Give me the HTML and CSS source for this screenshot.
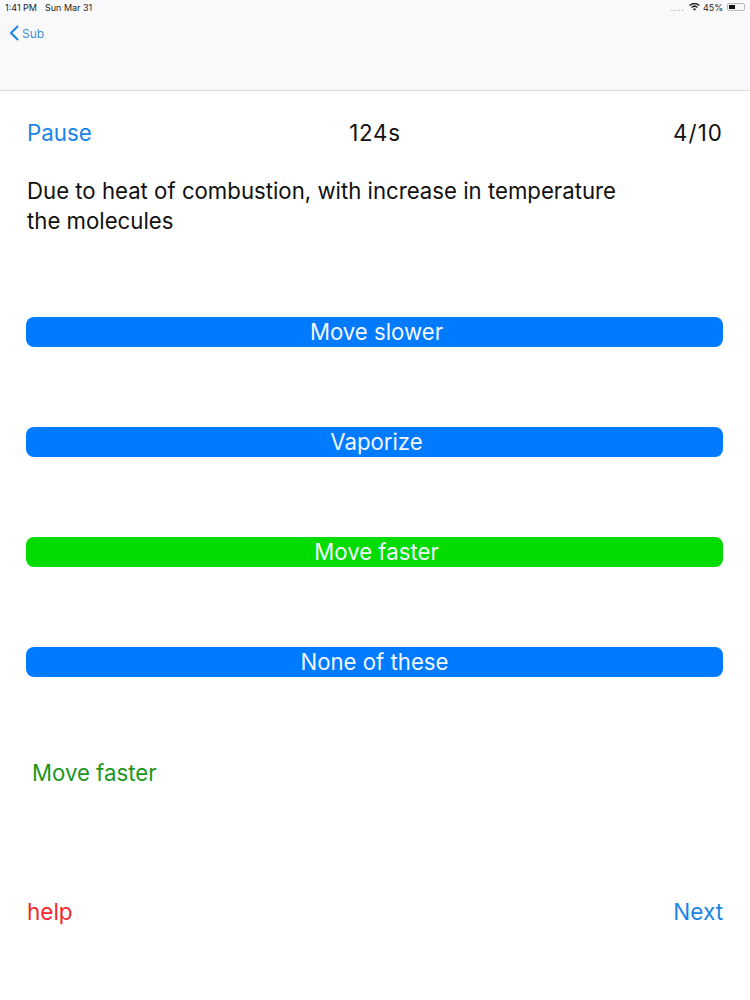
FILE: index.html
```html
<!DOCTYPE html>
<html lang="en">
<head>
<meta charset="utf-8">
<title>Quiz</title>
<link rel="stylesheet" href="styles.css">
</head>
<body>
<header class="nav">
  <div class="status">
    <div class="status-left"><span>1:41 PM</span><span>Sun Mar 31</span></div>
    <div class="status-right">
      <span class="signal">....</span>
      <svg class="wifi" viewBox="0 0 12 9" width="11" height="8"><path d="M6 8.6 4.3 6.7a2.5 2.5 0 0 1 3.4 0zM3.3 5.6 2.2 4.4a5.6 5.6 0 0 1 7.6 0L8.7 5.6a4 4 0 0 0-5.4 0zM1.2 3.4 0 2.2a8.8 8.8 0 0 1 12 0l-1.2 1.2a7.1 7.1 0 0 0-9.6 0z" fill="#222"/></svg>
      <span>45%</span>
      <span class="battery"><span class="battery-fill"></span></span>
    </div>
  </div>
  <a class="back">
    <svg viewBox="0 0 10 16" width="10" height="16"><path d="M8.5 1.500 2 8l6.500 6.500" fill="none" stroke="#1a84e6" stroke-width="2" stroke-linecap="round" stroke-linejoin="round"/></svg>
    <span>Sub</span>
  </a>
</header>
<main class="content">
  <div class="top-row">
    <span class="link">Pause</span>
    <span class="timer">124s</span>
    <span class="count">4/10</span>
  </div>
  <p class="question">Due to heat of combustion, with increase in temperature<br>the molecules</p>
  <div class="answers">
    <button class="answer">Move slower</button>
    <button class="answer">Vaporize</button>
    <button class="answer correct">Move faster</button>
    <button class="answer shift">None of these</button>
  </div>
  <p class="result">Move faster</p>
  <div class="bottom-row">
    <span class="help">help</span>
    <span class="link">Next</span>
  </div>
</main>
</body>
</html>
```
FILE: styles.css
```css
* { box-sizing: border-box; }
html, body { margin: 0; padding: 0; }
body { width: 750px; height: 1000px; background: #fff; font-family: "Inter", "Liberation Sans", sans-serif; color: #111; overflow: hidden; }
.nav { height: 91px; background: #f9f9fb; border-bottom: 1px solid #dcdcdf; }
.status { height: 14px; padding: 0 5px; display: flex; justify-content: space-between; align-items: center; font-size: 9px; color: #222; }
.status-left { display: flex; gap: 8px; }
.status-right { display: flex; align-items: center; gap: 3px; }
.signal { color: #aaa; letter-spacing: 1px; margin-right: 1px; line-height: 9px; }
.battery { width: 18px; height: 8px; border: 1px solid #bbb; border-radius: 2px; padding: 1px; display: block; margin-left: 1px; }
.battery-fill { display: block; width: 6px; height: 100%; background: #111; }
.back { display: flex; align-items: center; gap: 3px; margin: 11px 0 0 9px; font-size: 12px; color: #3d92dc; }
.content { padding: 0 27px 0 26px; }
.top-row { display: grid; grid-template-columns: 1fr auto 1fr; align-items: center; height: 30px; margin: 26px 0 0 1px; font-size: 22.300px; }
.link { color: #1a84e6; }
.timer { letter-spacing: 0.7px; }
.count { text-align: right; letter-spacing: 1.100px; }
.question { margin: 29px 0 0 1px; font-size: 22.200px; line-height: 30px; color: #111; height: 60px; }
.answers { display: flex; flex-direction: column; gap: 80px; margin-top: 81px; }
.answer { height: 30px; border: 0; border-radius: 8px; padding: 0 0 2px 4px; background: #007aff; color: #f2f7ff; font: inherit; font-size: 22.200px; text-align: center; }
.answer.correct { background: #00dc00; }
.answer.shift { padding: 0 0 2px; }
.result { margin: 81px 0 0 6px; height: 30px; font-size: 22.200px; line-height: 30px; color: #1d961d; }
.bottom-row { display: flex; justify-content: space-between; margin: 109px 0 0 1px; font-size: 22.500px; line-height: 30px; }
.help { color: #f0282d; }
```
